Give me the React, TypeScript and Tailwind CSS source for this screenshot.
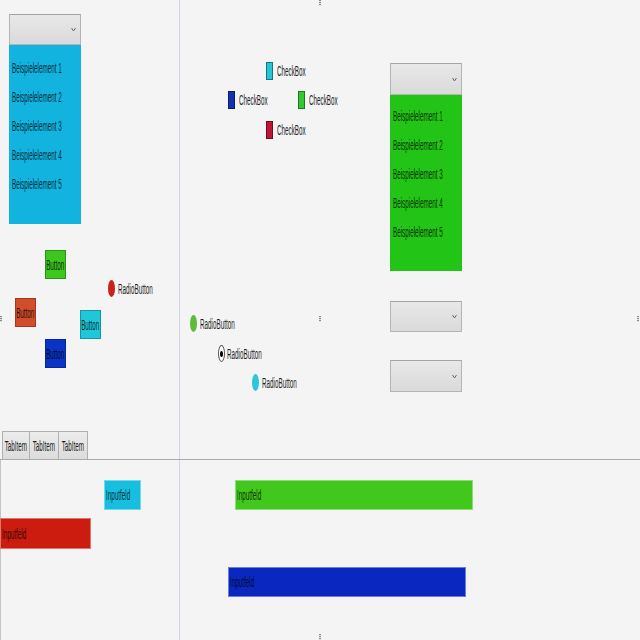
import React from "react";

const font = { fontFamily: '"Liberation Sans", Arial, sans-serif' };

const Txt = ({ children, className = "" }: { children: React.ReactNode; className?: string }) => (
  <span className={`inline-block whitespace-nowrap text-[14px] leading-none scale-x-[0.45] ${className}`}>{children}</span>
);

const Arrow = () => (
  <svg width="5" height="5" viewBox="0 0 5 5" className="shrink-0">
    <polyline points="0.5,1 2.5,4 4.5,1" fill="none" stroke="#666" strokeWidth="1" />
  </svg>
);

const Combo = ({ className = "" }: { className?: string }) => (
  <div className={`flex items-center justify-end pr-[4px] bg-gradient-to-b from-[#e8e8e8] to-[#dadada] border border-[#b4b4b4] border-t-[#a4a4a4] ${className}`}>
    <Arrow />
  </div>
);

const items = ["Beispielelement 1", "Beispielelement 2", "Beispielelement 3", "Beispielelement 4", "Beispielelement 5"];

const ListBox = ({ className = "" }: { className?: string }) => (
  <div className={`flex flex-col ${className}`}>
    {items.map((it) => (
      <div key={it} className="h-[29px] flex items-center pl-[3px]">
        <Txt className="origin-left text-black/80">{it}</Txt>
      </div>
    ))}
  </div>
);

const Btn = ({ className }: { className: string }) => (
  <div className={`absolute w-[21px] h-[29px] flex items-center justify-center border border-black/25 ${className}`}>
    <Txt className="origin-center text-black/85">Button</Txt>
  </div>
);

const Radio = ({ className, dot }: { className: string; dot: string }) => (
  <div className={`absolute flex items-center gap-[3px] ${className}`}>
    <div className={`w-[7px] h-[17px] rounded-[50%] ${dot}`} />
    <Txt className="origin-left text-[#1e1e1e]">RadioButton</Txt>
  </div>
);

const Check = ({ className, box }: { className: string; box: string }) => (
  <div className={`absolute flex items-center gap-[4px] ${className}`}>
    <div className={`w-[7px] h-[18px] border border-black/40 ${box}`} />
    <Txt className="origin-left text-[#1e1e1e]">CheckBox</Txt>
  </div>
);

const Input = ({ className }: { className: string }) => (
  <div className={`absolute h-[30px] flex items-center pl-[1px] border border-white/40 ${className}`}>
    <Txt className="origin-left text-black/80">Inputfeld</Txt>
  </div>
);

const Grip = ({ className }: { className: string }) => (
  <div className={`absolute w-[2px] h-[6px] bg-[repeating-linear-gradient(#8a8a8a_0_1px,#e0e0e0_1px_2px)] ${className}`} />
);

export default function App() {
  return (
    <div style={font} className="relative w-[640px] h-[640px] bg-[#f4f4f4] overflow-hidden flex flex-col">
      {/* top split */}
      <div className="h-[459px] flex">
        <div className="relative w-[179px]">
          <Combo className="absolute left-[9px] top-[14px] w-[72px] h-[31px]" />
          <ListBox className="absolute left-[9px] top-[45px] w-[72px] h-[179px] pt-[8px] bg-[#12b3df]" />

          <Btn className="left-[45px] top-[250px] bg-[#3cc61e]" />
          <Btn className="left-[15px] top-[298px] w-[20px] bg-[#d24e2a]" />
          <Btn className="left-[80px] top-[310px] w-[20px] bg-[#1ec8da]" />
          <Btn className="left-[45px] top-[339px] bg-[#0a34c6]" />

          <Radio className="left-[108px] top-[280px]" dot="bg-[#c8221c]" />

          <div className="absolute left-[2px] bottom-0 flex">
            {["w-[28px]", "w-[29px] border-l-0", "w-[29px] border-l-0"].map((w, i) => (
              <div key={i} className={`${w} h-[28px] flex items-center justify-center bg-gradient-to-b from-[#ececec] to-[#dcdcdc] border border-[#b0b0b0] border-b-0`}>
                <Txt className="origin-center text-[#1e1e1e]">TabItem</Txt>
              </div>
            ))}
          </div>
        </div>
        <div className="w-px bg-[#d2d4e2]" />
        <div className="relative flex-1">
          <Check className="left-[86px] top-[62px]" box="bg-[#22c6d6]" />
          <Check className="left-[48px] top-[91px]" box="bg-[#1232b2]" />
          <Check className="left-[118px] top-[91px]" box="bg-[#32c82e]" />
          <Check className="left-[86px] top-[121px]" box="bg-[#c0143a]" />

          <Radio className="left-[10px] top-[315px]" dot="bg-[#5cbc38]" />
          <div className="absolute left-[38px] top-[345px] flex items-center gap-[2px]">
            <div className="w-[7px] h-[17px] rounded-[50%] border border-[#555] bg-white flex items-center justify-center">
              <div className="w-[3px] h-[6px] rounded-[50%] bg-black" />
            </div>
            <Txt className="origin-left text-[#1e1e1e]">RadioButton</Txt>
          </div>
          <Radio className="left-[72px] top-[374px]" dot="bg-[#2ec6da]" />

          <Combo className="absolute left-[210px] top-[63px] w-[72px] h-[32px]" />
          <ListBox className="absolute left-[210px] top-[95px] w-[72px] h-[176px] pt-[6px] bg-[#22c416]" />
          <Combo className="absolute left-[210px] top-[301px] w-[72px] h-[31px]" />
          <Combo className="absolute left-[210px] top-[360px] w-[72px] h-[32px]" />

          <Grip className="left-[139px] top-[316px]" />
        </div>
      </div>

      <div className="h-px bg-[#a9a9a9]" />

      {/* bottom split */}
      <div className="flex-1 flex">
        <div className="relative w-[179px] border-l border-[#c4c4c4]">
          <Input className="left-[103px] top-[20px] w-[37px] bg-[#18bedf]" />
          <Input className="-left-px top-[58px] w-[91px] h-[31px] bg-[#cc1c10]" />
        </div>
        <div className="w-px bg-[#d2d4e2]" />
        <div className="relative flex-1">
          <Input className="left-[55px] top-[20px] w-[238px] bg-[#42c71c]" />
          <Input className="left-[48px] top-[107px] w-[238px] bg-[#0a28c0]" />
        </div>
      </div>

      <Grip className="left-[319px] top-0" />
      <Grip className="left-[319px] bottom-0" />
      <Grip className="left-0 top-[316px]" />
      <Grip className="right-[1px] top-[316px]" />
    </div>
  );
}
